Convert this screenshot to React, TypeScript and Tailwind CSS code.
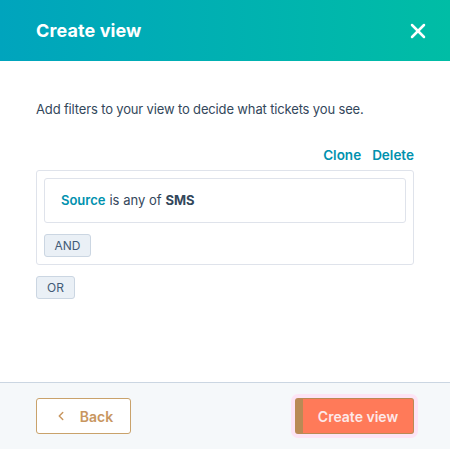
import { X, ChevronLeft } from 'lucide-react'

export default function App() {
  return (
    <div className="w-[450px] h-[449px] flex flex-col bg-white font-['Inter','Noto_Sans',sans-serif] text-[#33475b] overflow-hidden">
      <div className="h-[61px] shrink-0 flex items-center justify-between pl-9 pr-5 bg-gradient-to-r from-[#00a4bd] to-[#00bda5]">
        <h1 className="text-[18px] font-bold text-white tracking-[0.1px]">Create view</h1>
        <X className="h-6 w-6 text-white" strokeWidth={2.5} />
      </div>

      <div className="flex-1 px-9 pt-[38px]">
        <p className="text-[13px] leading-5 tracking-[-0.15px]">Add filters to your view to decide what tickets you see.</p>

        <div className="mt-[26px] flex justify-end gap-[11px] text-[13.5px] font-semibold text-[#0091ae] leading-5">
          <span>Clone</span>
          <span>Delete</span>
        </div>

        <div className="mt-[5px] border border-[#dfe3eb] rounded-[3px] p-[7px]">
          <div className="h-[45px] flex items-center px-4 border border-[#dfe3eb] rounded-[3px] text-[13px]">
            <span className="font-semibold text-[#0091ae]">Source</span>
            <span className="ml-[4px]">is any of</span>
            <span className="ml-[4px] font-bold">SMS</span>
          </div>
          <button className="mt-[11px] h-[23px] w-[47px] flex items-center justify-center bg-[#eaf0f6] border border-[#cbd6e2] rounded-[3px] text-[12px] text-[#425b76]">
            AND
          </button>
        </div>

        <button className="mt-[11px] h-[23px] w-[39px] flex items-center justify-center bg-[#eaf0f6] border border-[#cbd6e2] rounded-[3px] text-[12px] text-[#425b76]">
          OR
        </button>
      </div>

      <div className="h-[67px] shrink-0 flex items-center justify-between px-9 bg-[#f5f8fa] border-t border-[#cbd6e2]">
        <button className="h-[36px] w-[95px] flex items-center justify-center gap-[12px] bg-white border border-[#c9a26b] rounded-[3px] text-[14px] font-semibold text-[#c8965f]">
          <ChevronLeft className="h-3.5 w-3.5" strokeWidth={2.5} />
          Back
        </button>
        <button className="h-[36px] w-[119px] flex items-center justify-center bg-[#ff7a59] border border-[#b98a55] border-l-[8px] rounded-[3px] text-[14px] font-semibold text-[#fde8e8] shadow-[0_0_0_4px_#fde4f5]">
          Create view
        </button>
      </div>
    </div>
  )
}
